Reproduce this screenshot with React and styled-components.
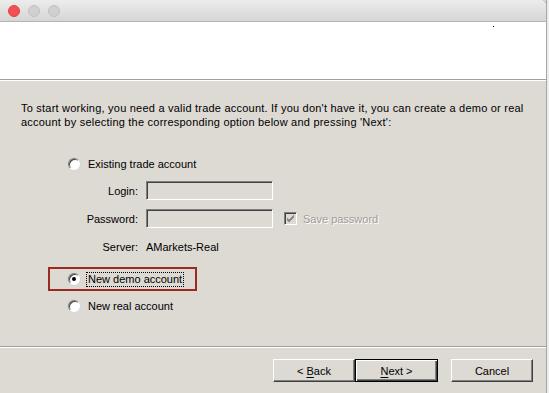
import styled, { createGlobalStyle } from "styled-components";

const GlobalStyle = createGlobalStyle`
  html, body {
    margin: 0;
    padding: 0;
    background: #c9c9c9;
    overflow: hidden;
  }
  body {
    font-family: "Liberation Sans", Arial, sans-serif;
    font-size: 11px;
    color: #000;
  }
`;

const Screen = styled.div`
  display: flex;
  width: 549px;
  height: 393px;
  overflow: hidden;
  background: #e3e3e3;
`;

const Window = styled.div`
  width: 546px;
  height: 393px;
  display: flex;
  flex-direction: column;
  background: #ddd9d3;
  border-top-right-radius: 5px;
  overflow: hidden;
  box-shadow: 1px 0 0 #9a9a9a;
`;

const Edge = styled.div`
  flex: 1;
  border-left: 1px solid #a8a8a8;
  background: #ececec;
`;

const TitleBar = styled.div`
  height: 22px;
  display: flex;
  align-items: center;
  gap: 8px;
  padding-left: 8px;
  background: linear-gradient(#ececec, #d6d6d6);
  border-bottom: 1px solid #b4b4b4;
  box-sizing: border-box;
`;

const Light = styled.span`
  width: 12px;
  height: 12px;
  border-radius: 50%;
  box-sizing: border-box;
  background: ${(p) => (p.$active ? "#f25056" : "#d0d0d0")};
  border: 1px solid ${(p) => (p.$active ? "#e0443e" : "#c0c0c0")};
`;

const Header = styled.div`
  height: 57px;
  background: #fff;
  border-bottom: 1px solid #a0a0a0;
  box-shadow: 0 1px 0 #fff;
  position: relative;
`;

const Dot = styled.span`
  position: absolute;
  right: 52px;
  top: 4px;
  width: 1px;
  height: 1px;
  background: #000;
`;

const Body = styled.div`
  flex: 1;
  padding: 21px 21px 0;
  border-bottom: 1px solid #a0a0a0;
  box-shadow: 0 1px 0 #fff;
`;

const Intro = styled.p`
  margin: 0;
  line-height: 14px;
  width: 510px;
  letter-spacing: 0.22px;
`;

const Options = styled.div`
  margin-top: 27px;
  margin-left: 47px;
  display: flex;
  flex-direction: column;
`;

const RadioRow = styled.div`
  display: flex;
  align-items: center;
  gap: 4px;
  height: 16px;
  margin-top: ${(p) => p.$top || 0}px;
`;

const Radio = styled.span`
  width: 12px;
  height: 12px;
  border-radius: 50%;
  box-sizing: border-box;
  background: #fff;
  border: 1px solid;
  border-color: #808080 #fff #fff #808080;
  box-shadow: inset 1px 1px 0 #404040, 0 0 0 0.5px #d4d0c8;
  display: flex;
  align-items: center;
  justify-content: center;
  margin-right: 2px;

  &::after {
    content: "";
    width: 4px;
    height: 4px;
    border-radius: 50%;
    background: ${(p) => (p.$checked ? "#000" : "transparent")};
  }
`;

const Label = styled.span`
  padding: 0 1px;
  line-height: 13px;
  border: 1px dotted ${(p) => (p.$focus ? "#000" : "transparent")};
`;

const Highlight = styled.div`
  margin-top: 11px;
  margin-left: -20px;
  width: 149px;
  height: 24px;
  box-sizing: border-box;
  border: 2px solid #9b2a22;
  display: flex;
  align-items: center;
  padding-left: 18px;
`;

const Fields = styled.div`
  display: grid;
  grid-template-columns: 70px 127px auto;
  grid-auto-rows: 19px;
  justify-content: start;
  column-gap: 8px;
  row-gap: 9px;
  margin-top: 9px;
  align-items: center;
`;

const FieldLabel = styled.span`
  text-align: right;
`;

const Input = styled.div`
  width: 127px;
  height: 19px;
  box-sizing: border-box;
  border: 1px solid;
  border-color: #808080 #fff #fff #808080;
  box-shadow: inset 1px 1px 0 #404040;
  background: #ddd9d3;
`;

const CheckRow = styled.div`
  display: flex;
  align-items: center;
  gap: 6px;
  margin-left: 3px;
  color: #a09c96;
  text-shadow: 1px 1px 0 #fff;
`;

const CheckBox = styled.span`
  width: 13px;
  height: 13px;
  box-sizing: border-box;
  border: 1px solid;
  border-color: #808080 #fff #fff #808080;
  box-shadow: inset 1px 1px 0 #404040;
  background: #ddd9d3;
  display: flex;
  align-items: center;
  justify-content: center;
`;

const ServerValue = styled.span`
  grid-column: 2 / 4;
`;

const Footer = styled.div`
  height: 45px;
  display: flex;
  align-items: center;
  padding-left: 273px;
  padding-top: 1px;
`;

const Button = styled.button`
  width: ${(p) => (p.$default ? 83 : 82)}px;
  height: 23px;
  box-sizing: border-box;
  font-family: inherit;
  font-size: 11px;
  color: #000;
  background: #ddd9d3;
  border: 1px solid;
  border-color: ${(p) =>
    p.$default ? "#000" : "#fff #404040 #404040 #fff"};
  box-shadow: ${(p) =>
    p.$default
      ? "inset 1px 1px 0 #fff, inset -1px -1px 0 #404040, inset -2px -2px 0 #808080"
      : "inset -1px -1px 0 #808080"};
  margin-left: ${(p) => p.$gap || 0}px;
  padding: 0;

  u {
    text-decoration: underline;
    text-underline-offset: 2px;
  }
`;

function Check() {
  return (
    <svg width="9" height="9" viewBox="0 0 9 9">
      <path d="M1 4 L3 6 L8 1 M1 5 L3 7 L8 2 M1 6 L3 8 L8 3" stroke="#8c8c8c" fill="none" strokeWidth="1" />
    </svg>
  );
}

export default function App() {
  return (
    <>
      <GlobalStyle />
      <Screen>
        <Window>
          <TitleBar>
            <Light $active />
            <Light />
            <Light />
          </TitleBar>
          <Header>
            <Dot />
          </Header>
          <Body>
            <Intro>
              To start working, you need a valid trade account. If you don't have it, you can create a demo or real
              account by selecting the corresponding option below and pressing 'Next':
            </Intro>
            <Options>
              <RadioRow>
                <Radio />
                <Label>Existing trade account</Label>
              </RadioRow>
              <Fields>
                <FieldLabel>Login:</FieldLabel>
                <Input />
                <span />
                <FieldLabel>Password:</FieldLabel>
                <Input />
                <CheckRow>
                  <CheckBox>
                    <Check />
                  </CheckBox>
                  Save password
                </CheckRow>
                <FieldLabel>Server:</FieldLabel>
                <ServerValue>AMarkets-Real</ServerValue>
              </Fields>
              <Highlight>
                <RadioRow>
                  <Radio $checked />
                  <Label $focus>New demo account</Label>
                </RadioRow>
              </Highlight>
              <RadioRow $top={7}>
                <Radio />
                <Label>New real account</Label>
              </RadioRow>
            </Options>
          </Body>
          <Footer>
            <Button>
              &lt; <u>B</u>ack
            </Button>
            <Button $default>
              <u>N</u>ext &gt;
            </Button>
            <Button $gap={13}>Cancel</Button>
          </Footer>
        </Window>
        <Edge />
      </Screen>
    </>
  );
}
